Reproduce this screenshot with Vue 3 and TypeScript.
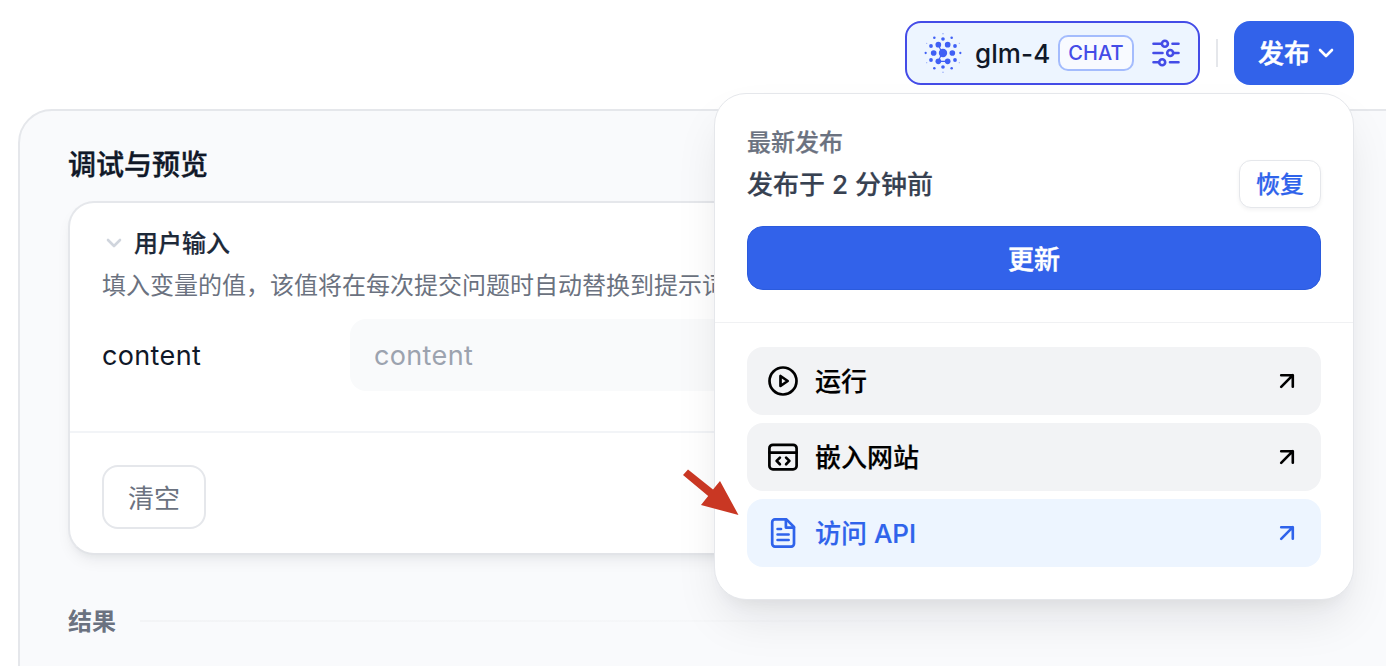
<script setup lang="ts">
interface Dot {
  x: number
  y: number
  r: number
  faint?: boolean
}

interface MenuItem {
  key: 'run' | 'embed' | 'api'
  label: string
  active?: boolean
}

const dots: Dot[] = [
  { x: 0, y: 0, r: 12.5 },
  { x: -28, y: 0, r: 8.5 }, { x: 28, y: 0, r: 8.5 },
  { x: -14, y: -25, r: 8.5 }, { x: 14, y: -25, r: 8.5 },
  { x: -14, y: 25, r: 8.5 }, { x: 14, y: 25, r: 8.5 },
  { x: 0, y: -42, r: 5.5 }, { x: 0, y: 42, r: 5.5 },
  { x: -36, y: -21, r: 5.7 }, { x: 36, y: -21, r: 5.7 },
  { x: -36, y: 21, r: 5.7 }, { x: 36, y: 21, r: 5.7 },
  { x: -52, y: 0, r: 3.4 }, { x: 52, y: 0, r: 3.4 },
  { x: -26, y: -46, r: 3.8 }, { x: 26, y: -46, r: 3.8 },
  { x: -26, y: 46, r: 3.8 }, { x: 26, y: 46, r: 3.8 },
  { x: 0, y: -58, r: 2.2, faint: true }, { x: 0, y: 58, r: 2.2, faint: true },
  { x: -49, y: -29, r: 2, faint: true }, { x: 49, y: -29, r: 2, faint: true },
  { x: -49, y: 29, r: 2, faint: true }, { x: 49, y: 29, r: 2, faint: true },
]

const items: MenuItem[] = [
  { key: 'run', label: '运行' },
  { key: 'embed', label: '嵌入网站' },
  { key: 'api', label: '访问 API', active: true },
]
</script>

<template>
  <div class="page">
    <header class="topbar">
      <div class="model">
        <svg class="logo" viewBox="-60 -60 120 120">
          <circle v-for="(d, i) in dots" :key="i" :cx="d.x" :cy="d.y" :r="d.r" :class="{ faint: d.faint }" />
          <path d="M-14-25-3 0l-11 25h28" />
        </svg>
        <span class="model-name">glm-4</span>
        <span class="tag">CHAT</span>
        <svg class="sliders" viewBox="0 0 28 28">
          <path d="M1.5 4.7h8M20.5 4.7h6M1.5 14h9M22 14h4.5M1.5 23.3h5M18 23.3h8.5" />
          <circle cx="12.9" cy="4.7" r="3" />
          <circle cx="18.2" cy="14" r="3" />
          <circle cx="10.2" cy="23.3" r="3" />
        </svg>
      </div>
      <span class="split"></span>
      <button class="publish">
        <span>发布</span>
        <svg class="chevron" viewBox="0 0 16 10"><path d="M2 2l6 6 6-6" /></svg>
      </button>
    </header>

    <main class="panel">
      <h1 class="title">调试与预览</h1>
      <section class="card">
        <div class="card-body">
          <div class="card-title">
            <svg class="chevron" viewBox="0 0 16 10"><path d="M2 2l6 6 6-6" /></svg>
            <h2>用户输入</h2>
          </div>
          <p class="hint">填入变量的值，该值将在每次提交问题时自动替换到提示词中</p>
          <div class="field">
            <label>content</label>
            <div class="input">content</div>
          </div>
        </div>
        <div class="card-foot">
          <button class="clear">清空</button>
        </div>
      </section>
      <div class="result">
        <span>结果</span>
        <i></i>
      </div>
    </main>

    <div class="popup">
      <div class="popup-head">
        <div class="caption">最新发布</div>
        <div class="status">
          <span>发布于 2 分钟前</span>
          <button class="restore">恢复</button>
        </div>
        <button class="update">更新</button>
      </div>
      <nav class="menu">
        <a v-for="item in items" :key="item.key" class="item" :class="{ active: item.active }">
          <svg class="icon" viewBox="0 0 32 32">
            <template v-if="item.key === 'run'">
              <circle cx="16" cy="16" r="13.5" />
              <path d="M13.5 11v10l7.2-5z" />
            </template>
            <template v-else-if="item.key === 'embed'">
              <rect x="2.4" y="3.8" width="27.2" height="24.6" rx="3.5" />
              <path d="M2.4 11.6h27.2M12.9 16.6l-3.3 3.3 3.3 3.3M19.1 16.6l3.3 3.3-3.3 3.3" />
            </template>
            <template v-else>
              <path d="M19.4 2.4H8A2.8 2.8 0 0 0 5.2 5.2v21.6A2.8 2.8 0 0 0 8 29.6h16.2a2.8 2.8 0 0 0 2.8-2.8V10z" />
              <path d="M18.9 2.6v8h8M10.6 12h3.4M10.6 17.5h11M10.6 23h11" />
            </template>
          </svg>
          <span>{{ item.label }}</span>
          <svg class="go" viewBox="0 0 16 16"><path d="M2.2 2.2h11.6v11.6M13.8 2.2L2.2 13.8" /></svg>
        </a>
      </nav>
    </div>

    <svg class="pointer" viewBox="0 0 60 52">
      <path d="M8 4.5L33 24.5 40 16l18.5 34L21 40l7.2-9L3 10z" />
    </svg>
  </div>
</template>

<style>
body {
  background: #fff;
  overflow: hidden;
}
</style>

<style scoped>
.page {
  position: relative;
  width: 1386px;
  height: 666px;
  overflow: hidden;
  font-family: Inter, "Noto Sans CJK SC", sans-serif;
  color: #101828;
}
.page *,
.page {
  box-sizing: border-box;
}
button {
  font-family: inherit;
  padding: 0;
}
h1, h2, p {
  margin: 0;
}
svg {
  display: block;
  flex: none;
}
.title,
.card-title h2,
.caption,
.status,
.publish span,
.update,
.item span {
  -webkit-text-stroke: .2px currentColor;
}
.topbar {
  display: flex;
  align-items: center;
  justify-content: flex-end;
  height: 109px;
  padding: 21px 32px 24px 0;
}
.model {
  display: flex;
  align-items: center;
  width: 295px;
  height: 64px;
  padding-left: 16px;
  border: 2px solid #444ce7;
  border-radius: 16px;
  background: #edf5ff;
}
.logo {
  width: 40px;
  height: 40px;
  fill: #4060f5;
}
.logo path {
  fill: none;
  stroke: #4060f5;
  stroke-width: 3.5;
}
.faint {
  opacity: .45;
}
.model-name {
  width: 75px;
  margin-left: 12px;
  padding-top: 2px;
  font-size: 26px;
  font-weight: 500;
  line-height: 36px;
  letter-spacing: .1px;
  white-space: nowrap;
}
.tag {
  width: 76px;
  height: 36px;
  margin-left: 8px;
  border: 2px solid #a4bcfd;
  border-radius: 10px;
  background: #f8faff;
  color: #444ce7;
  font-size: 20px;
  font-weight: 500;
  line-height: 33px;
  letter-spacing: .1px;
  text-align: center;
}
.sliders {
  width: 28px;
  height: 28px;
  margin-left: 18px;
  fill: none;
  stroke: #444ce7;
  stroke-width: 2.6;
  stroke-linecap: round;
}
.split {
  width: 2px;
  height: 28px;
  margin: 0 16px;
  background: #e5e7eb;
}
.publish {
  display: flex;
  align-items: center;
  width: 120px;
  height: 64px;
  padding-left: 24px;
  border: 0;
  border-radius: 16px;
  background: #3262ea;
  color: #fff;
  font-size: 26px;
  font-weight: 500;
}
.publish span {
  padding-bottom: 3px;
  -webkit-text-stroke-width: .5px;
}
.chevron {
  width: 16px;
  height: 10px;
  fill: none;
  stroke: currentColor;
  stroke-width: 2.6;
  stroke-linecap: round;
  stroke-linejoin: round;
}
.publish .chevron {
  margin-left: 8px;
}
.panel {
  width: 1400px;
  height: 700px;
  margin-left: 18px;
  padding: 34px 80px 0 48px;
  border: 2px solid #e5e7eb;
  border-radius: 34px 0 0 0;
  background: #f9fafc;
}
.title {
  height: 40px;
  font-size: 28px;
  font-weight: 500;
  line-height: 40px;
  -webkit-text-stroke-width: .4px;
}
.card {
  height: 354px;
  margin-top: 16px;
  border: 2px solid #e5e7eb;
  border-bottom-color: #e2e4e8;
  border-radius: 26px;
  background: #fff;
  box-shadow: 0 8px 16px -4px rgba(16, 24, 40, .08), 0 4px 6px -2px rgba(16, 24, 40, .03);
}
.card-body {
  height: 230px;
  padding: 22px 32px 0;
  border-bottom: 2px solid #f2f4f7;
}
.card-title {
  display: flex;
  align-items: center;
  height: 36px;
  padding-left: 4px;
}
.card-title .chevron {
  color: #d0d5dd;
}
.card-title h2 {
  margin-left: 12px;
  padding-top: 2px;
  color: #1d2939;
  font-size: 24px;
  font-weight: 500;
  line-height: 36px;
}
.hint {
  height: 36px;
  margin-top: 7px;
  color: #6b7280;
  font-size: 24px;
  line-height: 36px;
  white-space: nowrap;
}
.field {
  display: flex;
  align-items: center;
  height: 72px;
  margin-top: 15px;
  font-size: 27px;
  letter-spacing: .35px;
}
.field label {
  width: 248px;
}
.input {
  flex: 1;
  height: 72px;
  padding-left: 24px;
  border-radius: 16px;
  background: #f9fafb;
  color: #9ca3af;
  line-height: 74px;
}
.card-foot {
  padding: 32px 32px 0;
}
.clear {
  width: 104px;
  height: 64px;
  padding-bottom: 2px;
  border: 2px solid #e5e7eb;
  border-radius: 16px;
  background: #fff;
  color: #6b7280;
  font-size: 26px;
}
.result {
  display: flex;
  align-items: center;
  height: 36px;
  margin-top: 48px;
  color: #6b7280;
  font-size: 24px;
  font-weight: 700;
}
.result span {
  padding-bottom: 4px;
}
.result i {
  flex: 1;
  height: 2px;
  margin-left: 24px;
  background: linear-gradient(90deg, #f3f4f6, #f9fafc);
}
.popup {
  position: absolute;
  top: 93px;
  left: 714px;
  width: 640px;
  height: 507px;
  border: 1px solid #e5e7eb;
  border-radius: 32px;
  background: #fff;
  box-shadow: 0 24px 48px -8px rgba(16, 20, 26, .1), 0 12px 16px -8px rgba(16, 20, 26, .05);
}
.popup-head {
  height: 229px;
  padding: 30px 32px 0;
  border-bottom: 1px solid #f0f1f3;
}
.caption {
  height: 36px;
  color: #6b7280;
  font-size: 24px;
  font-weight: 500;
  line-height: 38px;
}
.status {
  display: flex;
  align-items: center;
  justify-content: space-between;
  height: 48px;
  color: #374151;
  font-size: 26px;
  font-weight: 500;
}
.status > span {
  padding-bottom: 3px;
}
.restore {
  width: 82px;
  height: 48px;
  padding-bottom: 3px;
  border: 1px solid #e5e7eb;
  border-radius: 12px;
  background: #fff;
  box-shadow: 0 2px 4px rgba(16, 24, 40, .05);
  color: #2f63eb;
  font-size: 24px;
  font-weight: 500;
  -webkit-text-stroke: .25px currentColor;
}
.update {
  display: block;
  width: 574px;
  height: 64px;
  margin-top: 18px;
  padding-bottom: 2px;
  border: 1px solid #2b5bdd;
  border-radius: 16px;
  background: #3262ea;
  color: #fff;
  font-size: 26px;
  font-weight: 500;
  -webkit-text-stroke-width: .5px;
}
.menu {
  display: flex;
  flex-direction: column;
  gap: 8px;
  padding: 24px 32px 0;
}
.item {
  display: flex;
  align-items: center;
  height: 68px;
  padding: 0 26px 0 20px;
  border-radius: 16px;
  background: #f2f3f5;
  color: #000;
  font-size: 26px;
  font-weight: 500;
}
.item.active {
  background: #edf5ff;
  color: #2f63eb;
}
.icon {
  width: 32px;
  height: 32px;
  fill: none;
  stroke: currentColor;
  stroke-width: 2.7;
  stroke-linecap: round;
  stroke-linejoin: round;
}
.item span {
  flex: 1;
  margin-left: 16px;
  padding-bottom: 3px;
}
.go {
  width: 16px;
  height: 16px;
  fill: none;
  stroke: currentColor;
  stroke-width: 2.6;
  stroke-linecap: round;
  stroke-linejoin: round;
}
.pointer {
  position: absolute;
  top: 465px;
  left: 680px;
  width: 60px;
  height: 52px;
  fill: #c93723;
}
</style>
